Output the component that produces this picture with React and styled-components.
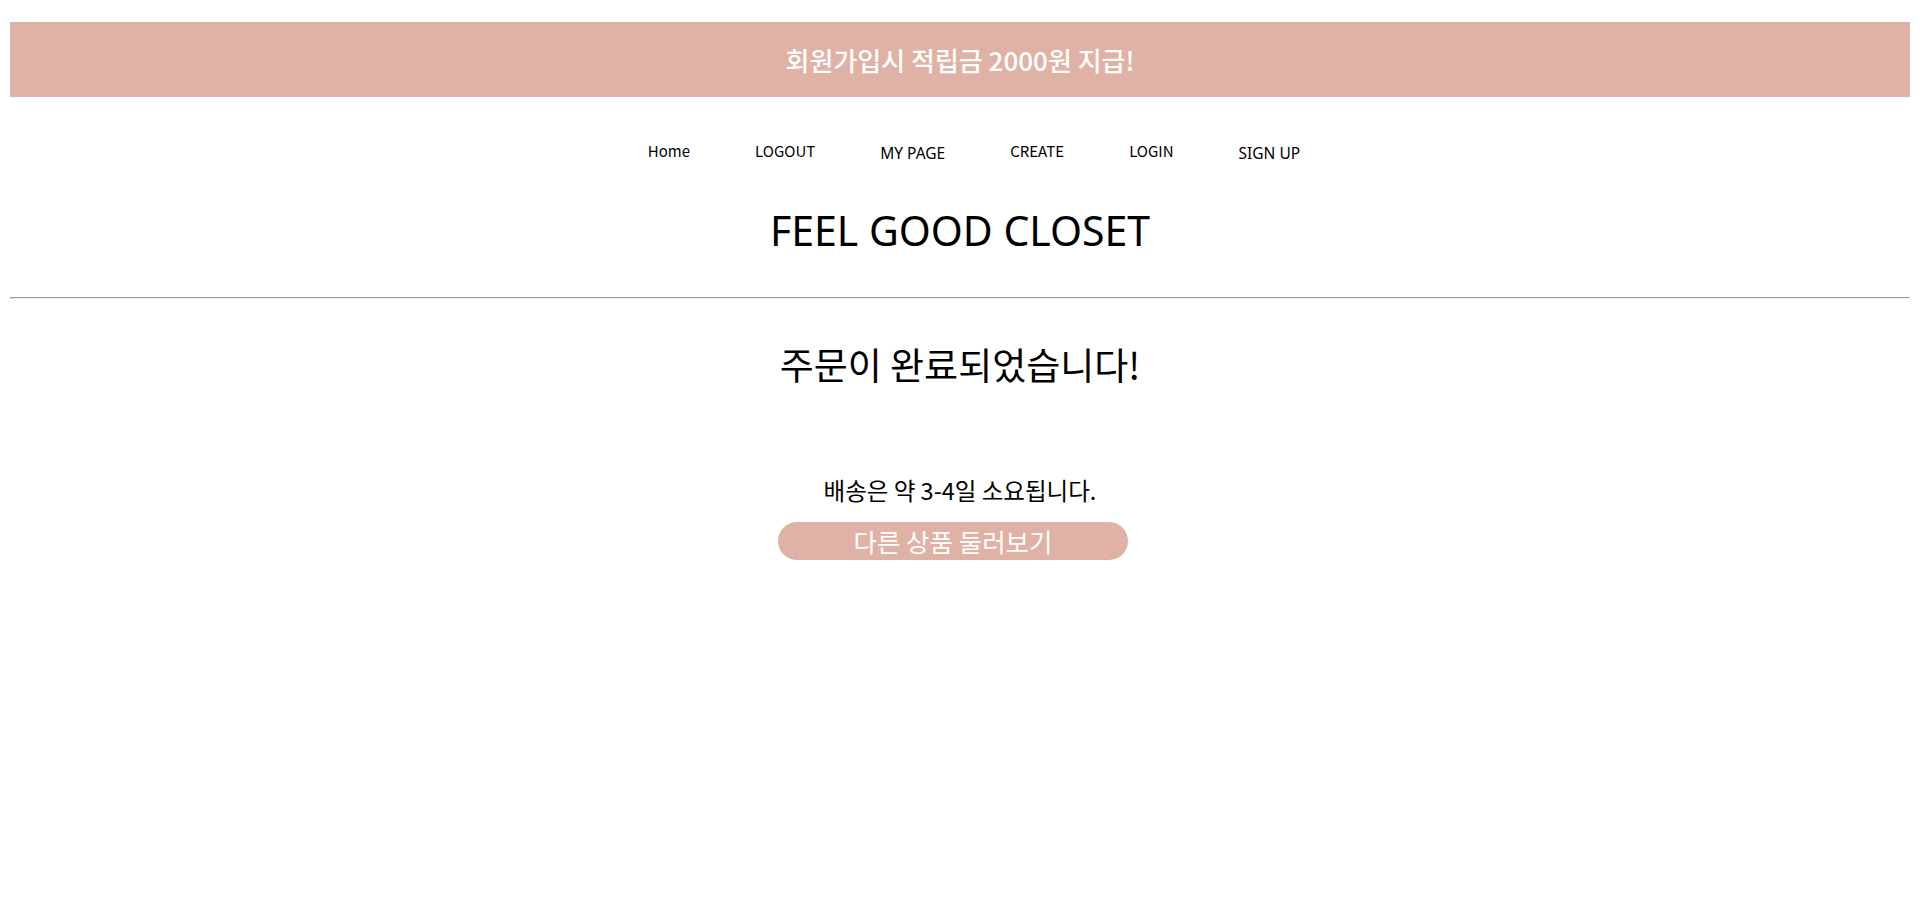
import React from "react";
import styled, { createGlobalStyle } from "styled-components";

const GlobalStyle = createGlobalStyle`
    body{
        margin:22px 10px 10px;
        background:#ffffff;
        font-family:"Noto Sans CJK KR", "Noto Sans", sans-serif;
        color:#000;
    }
`

const PINK = "#e0b2a5";

export const Banner = styled.div`
    height:75px;
    background:${PINK};
    display:flex;
    align-items:center;
    justify-content:center;
    color:#fff;
    font-size:26px;
    font-weight:500;
`

export const NavBar = styled.nav`
    display:flex;
    justify-content:center;
    align-items:flex-start;
    gap:65px;
    padding:42px 0 0 28px;
    height:24px;
`

export const NavItem = styled.a`
    font-family:${p => p.$wide ? `"Noto Sans", sans-serif` : `"Noto Sans CJK KR", sans-serif`};
    font-size:${p => p.$wide ? "15.5px" : "15px"};
    line-height:24px;
    margin-top:${p => p.$wide ? "2px" : "0"};
    color:#000;
    text-decoration:none;
    cursor:pointer;
`

export const Logo = styled.h1`
    margin:47px 0 0;
    text-align:center;
    font-family:"Noto Sans", sans-serif;
    font-weight:400;
    font-size:41px;
    line-height:40px;
`

export const Divider = styled.hr`
    margin:47px 0 0;
`

export const OrderSection = styled.section`
    display:flex;
    flex-direction:column;
    align-items:center;
`

export const Heading = styled.h2`
    margin:43px 0 0;
    font-weight:400;
    font-size:37px;
    line-height:1.2;
`

export const Notice = styled.p`
    margin:90px 0 0;
    font-size:23.5px;
    line-height:1.2;
`

export const MoreButton = styled.button`
    margin:17px 14px 0 0;
    width:350px;
    height:38px;
    border:none;
    border-radius:19px;
    background:${PINK};
    color:#fff;
    font-family:"Noto Sans CJK KR", sans-serif;
    font-size:25.5px;
    line-height:38px;
    padding:0;
    cursor:pointer;
`

const links = [
    { label: "Home" },
    { label: "LOGOUT" },
    { label: "MY PAGE", wide: true },
    { label: "CREATE" },
    { label: "LOGIN" },
    { label: "SIGN UP", wide: true },
]

export default function App() {
    return (
        <>
            <GlobalStyle />
            <Banner>회원가입시 적립금 2000원 지급!</Banner>
            <NavBar>
                {links.map(l => (
                    <NavItem key={l.label} $wide={l.wide}>{l.label}</NavItem>
                ))}
            </NavBar>
            <Logo>FEEL GOOD CLOSET</Logo>
            <Divider />
            <OrderSection>
                <Heading>주문이 완료되었습니다!</Heading>
                <Notice>배송은 약 3-4일 소요됩니다.</Notice>
                <MoreButton>다른 상품 둘러보기</MoreButton>
            </OrderSection>
        </>
    )
}
